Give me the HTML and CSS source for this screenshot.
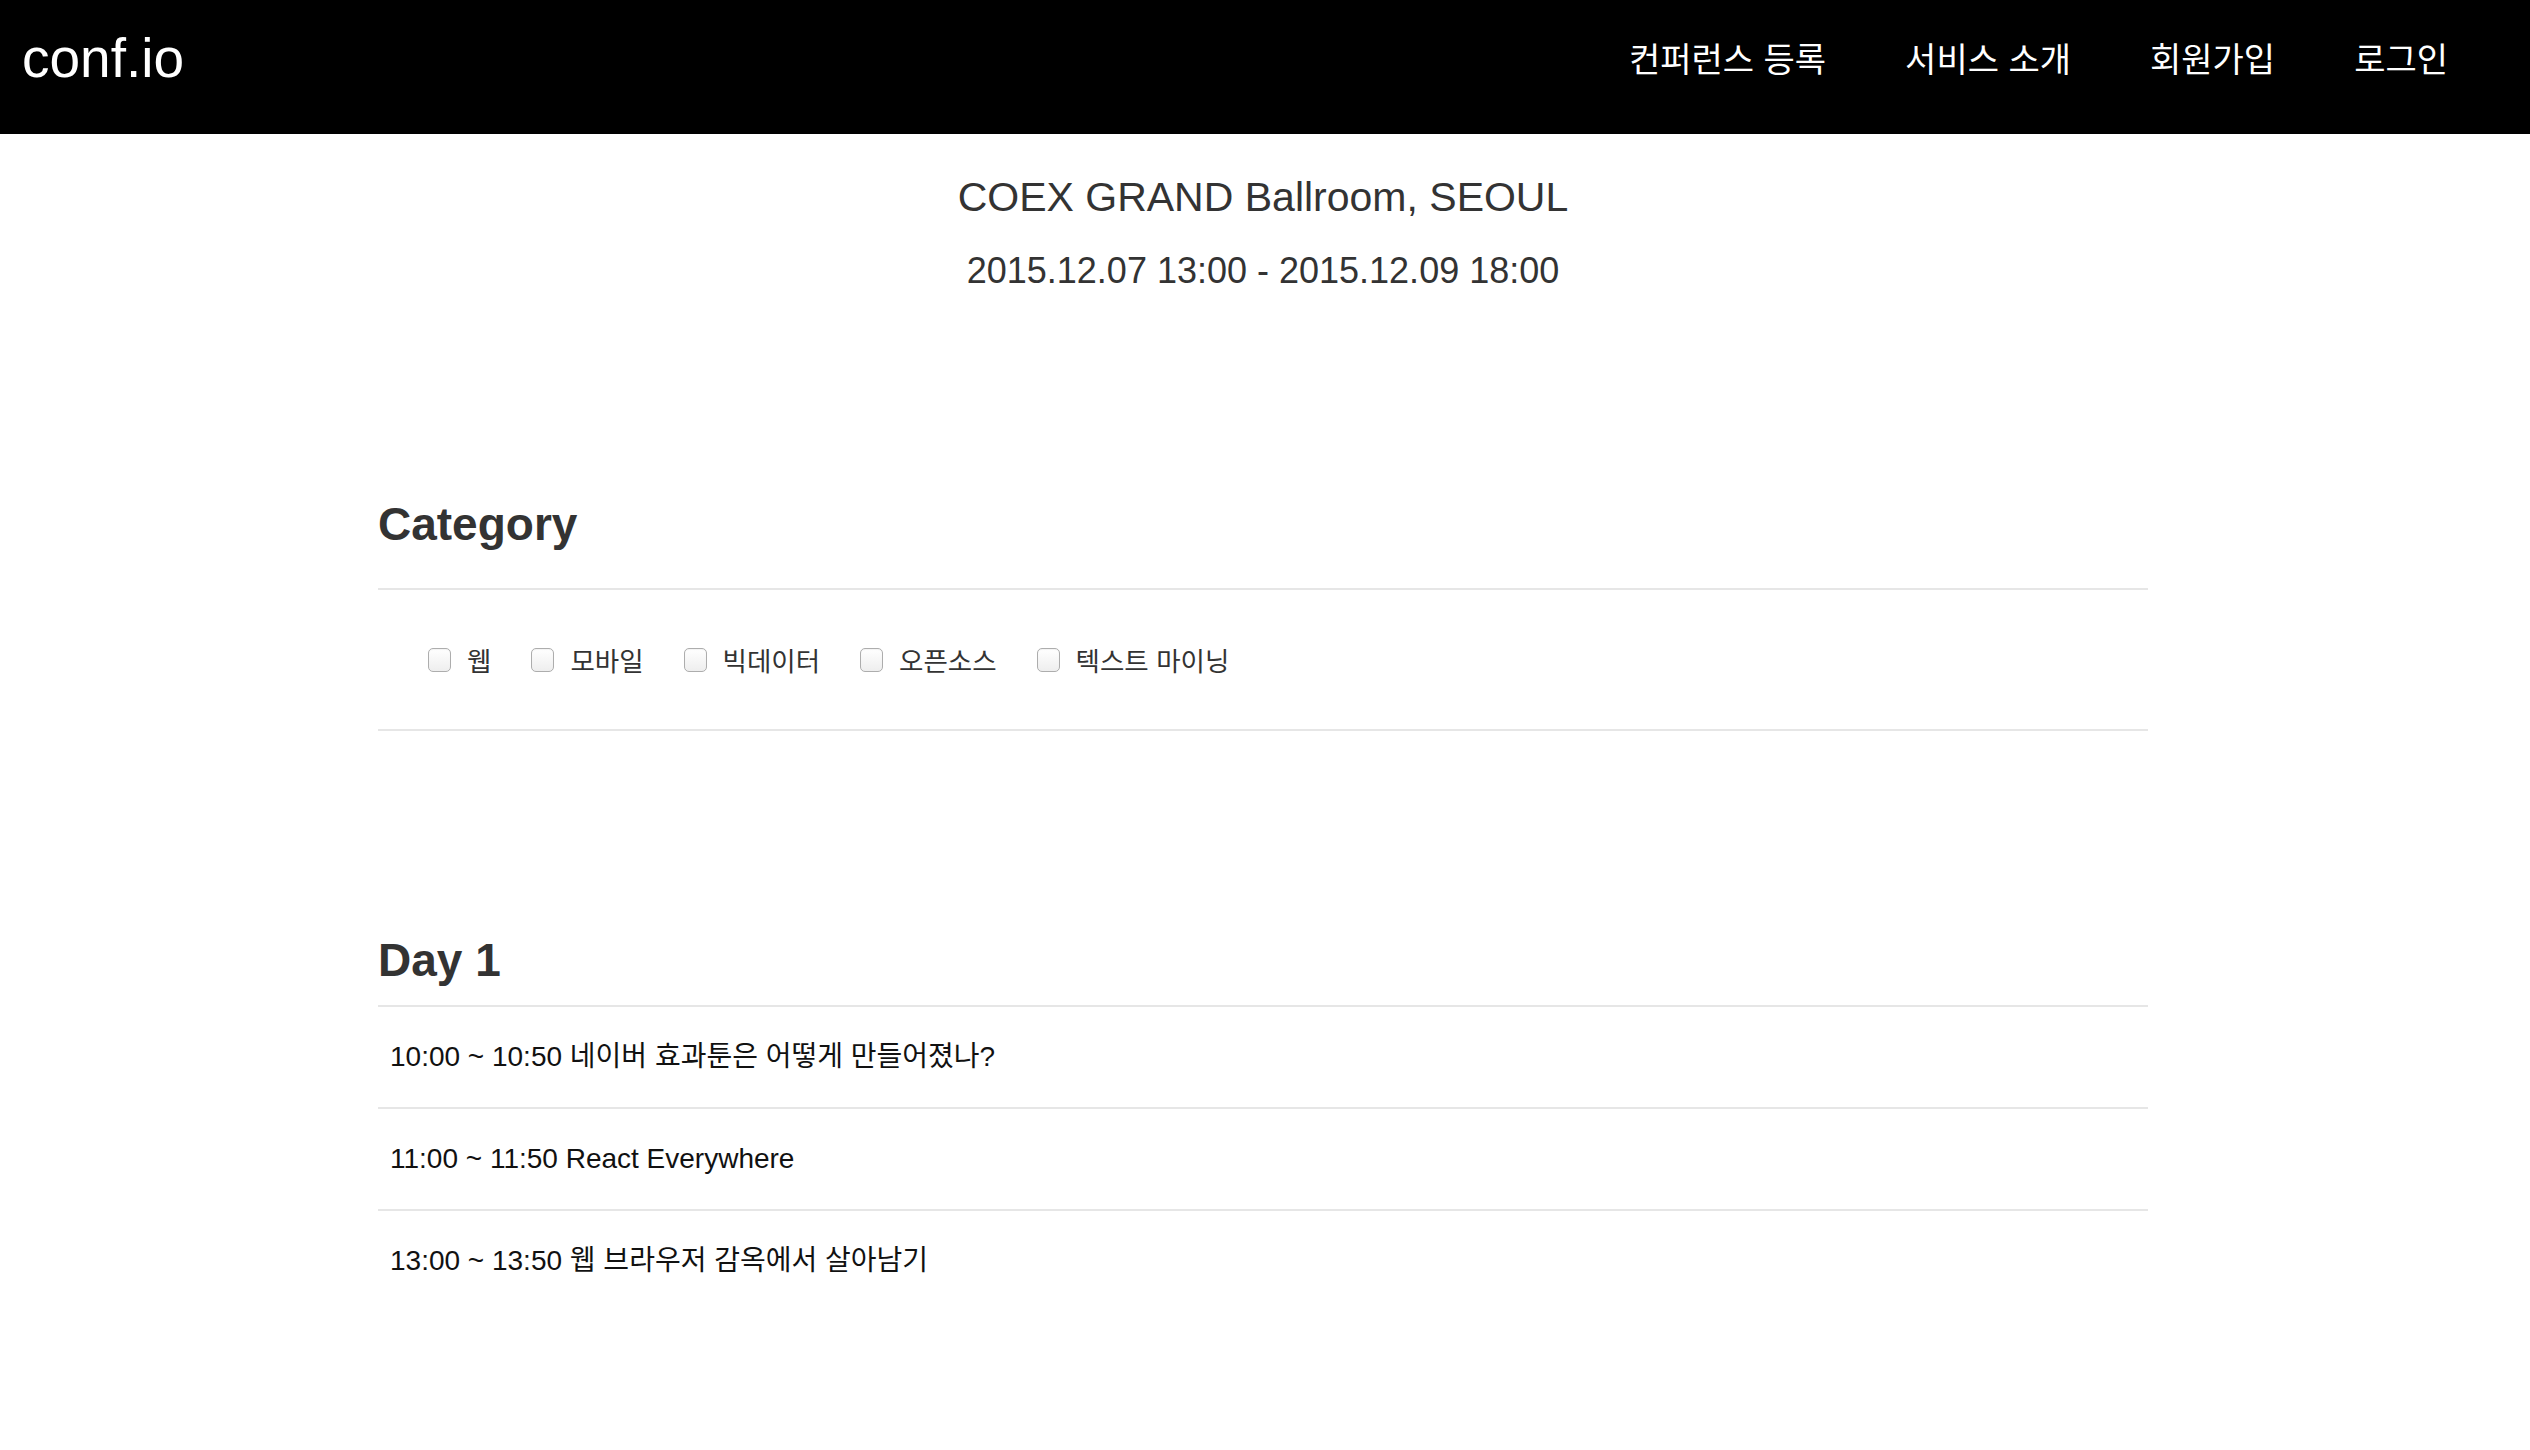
FILE: index.html
```html
<!DOCTYPE html>
<html lang="ko">
<head>
<meta charset="utf-8">
<title>conf.io</title>
<link rel="stylesheet" href="styles.css">
</head>
<body>
<header class="topbar">
  <a class="brand" href="#">conf.io</a>
  <nav class="nav">
    <a href="#">컨퍼런스 등록</a>
    <a href="#">서비스 소개</a>
    <a href="#">회원가입</a>
    <a href="#">로그인</a>
  </nav>
</header>

<main class="container">
  <section class="event-info">
    <h3 class="venue">COEX GRAND Ballroom, SEOUL</h3>
    <p class="dates">2015.12.07 13:00 - 2015.12.09 18:00</p>
  </section>

  <section class="category">
    <h2 class="section-title">Category</h2>
    <div class="rule"></div>
    <div class="checks">
      <label class="check"><input type="checkbox"><span>웹</span></label>
      <label class="check"><input type="checkbox"><span>모바일</span></label>
      <label class="check"><input type="checkbox"><span>빅데이터</span></label>
      <label class="check"><input type="checkbox"><span>오픈소스</span></label>
      <label class="check"><input type="checkbox"><span>텍스트 마이닝</span></label>
    </div>
    <div class="rule"></div>
  </section>

  <section class="day">
    <h2 class="section-title day-title">Day 1</h2>
    <ul class="sessions">
      <li>10:00 ~ 10:50 네이버 효과툰은 어떻게 만들어졌나?</li>
      <li>11:00 ~ 11:50 React Everywhere</li>
      <li>13:00 ~ 13:50 웹 브라우저 감옥에서 살아남기</li>
    </ul>
  </section>
</main>
</body>
</html>
```

FILE: styles.css
```css
html, body {
  margin: 0;
  padding: 0;
  background: #fff;
}

body {
  font-family: "Liberation Sans", "Noto Sans CJK KR", sans-serif;
  color: #333;
}

a {
  text-decoration: none;
}

.topbar {
  height: 134px;
  background: #000;
  display: flex;
  justify-content: space-between;
  align-items: flex-start;
  box-sizing: border-box;
}

.brand {
  color: #fff;
  font-family: "Liberation Sans", sans-serif;
  font-size: 55px;
  line-height: 55px;
  padding: 31px 0 0 22px;
}

.nav {
  display: flex;
  gap: 79px;
  padding: 41px 82px 0 0;
}

.nav a {
  color: #fff;
  font-family: "Noto Sans CJK KR", sans-serif;
  font-size: 34px;
  line-height: 34px;
  white-space: nowrap;
}

.container {
  width: 1770px;
  margin: 0 auto 0 calc(50% - 887px);
}

.event-info {
  text-align: center;
  padding-top: 41px;
}

.venue {
  margin: 0;
  font-weight: 400;
  font-size: 41px;
  line-height: 45px;
  color: #333;
}

.dates {
  margin: 31px 0 0;
  font-size: 36px;
  line-height: 40px;
  color: #333;
}

.section-title {
  margin: 207px 0 38px;
  font-size: 46px;
  line-height: 52px;
  font-weight: 700;
  color: #333;
}

.day-title {
  margin: 203px 0 19px;
}

.rule {
  height: 2px;
  background: #e6e6e6;
}

.checks {
  height: 139px;
  display: flex;
  align-items: center;
  gap: 40px;
  padding-left: 50px;
}

.check {
  display: inline-flex;
  align-items: center;
  gap: 16px;
  font-family: "Noto Sans CJK KR", sans-serif;
  font-size: 26.5px;
  line-height: 30px;
  color: #333;
}

.check input {
  -webkit-appearance: none;
  appearance: none;
  width: 23px;
  height: 24px;
  margin: 0;
  border: 1px solid #adadad;
  border-radius: 5px;
  background: linear-gradient(#ffffff, #eeeeee);
  box-shadow: inset 0 1px 1px rgba(0, 0, 0, 0.05);
  box-sizing: border-box;
}

.sessions {
  list-style: none;
  margin: 0;
  padding: 0;
}

.sessions li {
  border-top: 2px solid #e6e6e6;
  padding: 30px 12px 30px;
  font-size: 28px;
  line-height: 40px;
  color: #111;
}
```
